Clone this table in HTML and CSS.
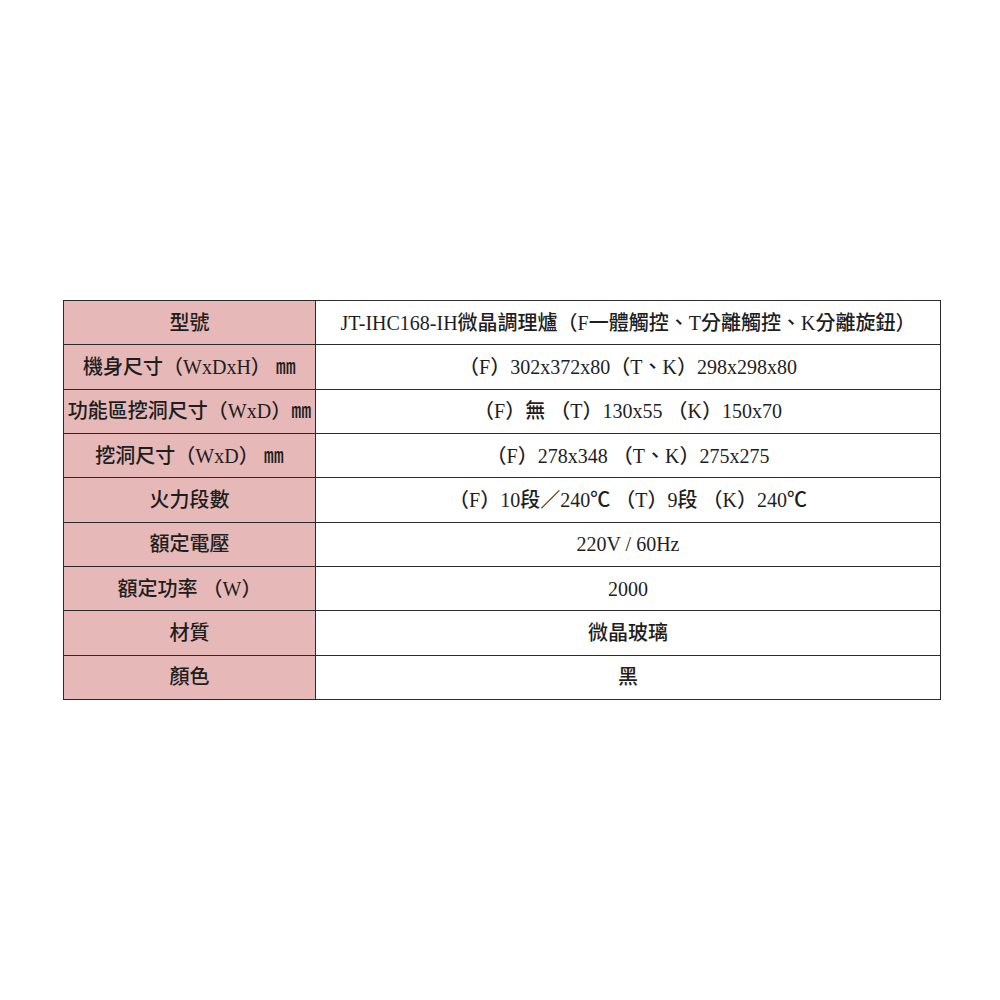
FILE: index.html
```html
<!DOCTYPE html>
<html lang="zh-Hant">
<head>
<meta charset="utf-8">
<link rel="stylesheet" href="styles.css">
</head>
<body>
<table class="spec">
  <tr><th>型號</th><td>JT-IHC168-IH微晶調理爐（F一體觸控、T分離觸控、K分離旋鈕）</td></tr>
  <tr><th>機身尺寸（WxDxH） ㎜</th><td>（F）302x372x80（T、K）298x298x80</td></tr>
  <tr><th>功能區挖洞尺寸（WxD）㎜</th><td>（F）無 （T）130x55 （K）150x70</td></tr>
  <tr><th>挖洞尺寸（WxD） ㎜</th><td>（F）278x348 （T、K）275x275</td></tr>
  <tr><th>火力段數</th><td>（F）10段／240℃ （T）9段 （K）240℃</td></tr>
  <tr><th>額定電壓</th><td>220V / 60Hz</td></tr>
  <tr><th>額定功率 （W）</th><td>2000</td></tr>
  <tr><th>材質</th><td>微晶玻璃</td></tr>
  <tr><th>顏色</th><td>黑</td></tr>
</table>
</body>
</html>
```

FILE: styles.css
```css
html, body {
  margin: 0;
  padding: 0;
  background: #ffffff;
}
body {
  padding-top: 300px;
  padding-left: 63px;
  font-family: "Liberation Serif", "Noto Sans CJK TC", serif;
  font-size: 20px;
  font-weight: 500;
  color: #1e1e1e;
}
.spec {
  border-collapse: collapse;
  width: 878px;
  table-layout: fixed;
}
.spec tr {
  height: 44.33px;
}
.spec th,
.spec td {
  border: 1px solid #2b2b2b;
  text-align: center;
  vertical-align: middle;
  padding: 0;
  font-weight: 500;
  white-space: nowrap;
  line-height: 1.2;
}
.spec th {
  width: 251px;
  background: #e6b8b7;
}
.spec td {
  background: #ffffff;
}
```
